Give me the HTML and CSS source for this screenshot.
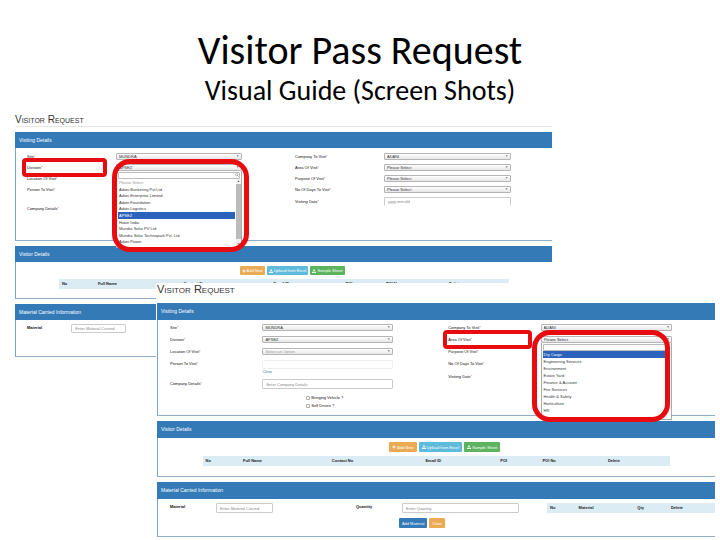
FILE: index.html
```html
<!DOCTYPE html>
<html lang="en">
<head>
  <meta charset="UTF-8" />
  <meta name="viewport" content="width=device-width, initial-scale=1.0"/>
  <title>Visitor Pass Request</title>
  <link rel="stylesheet" href="styles.css">
</head>
<body>
  <header class="slide-title">
    <h1>Visitor Pass Request</h1>
    <p>Visual Guide (Screen Shots)</p>
  </header>

  <main class="stage">
    <!-- Step 1: choose the division -->
    <section class="shot shot-division">
      <h2>Visitor Request</h2>

      <div class="panel panel-visit">
        <h3>Visiting Details</h3>
        <form class="form">
          <div class="fields">
            <div class="field">
              <label for="site1">Site<i>*</i></label>
              <div class="control select"><select id="site1"><option>MUNDRA</option></select></div>
            </div>
            <div class="field">
              <label for="division1">Division<i>*</i><span class="mark mark-label"></span></label>
              <div class="control select">
                <select id="division1"><option>APSEZ</option></select>
                <div class="dropdown">
                  <input class="search" type="text" aria-label="Search division" />
                  <svg class="lens" viewBox="0 0 10 10"><circle cx="4" cy="4" r="3"/><path d="M6 6l3 3"/></svg>
                  <ul>
                    <li class="muted">Please Select</li>
                    <li>Adani Bunkering Pvt Ltd</li>
                    <li>Adani Enterprise Limited</li>
                    <li>Adani Foundation</li>
                    <li>Adani Logistics</li>
                    <li class="active">APSEZ</li>
                    <li>Howe India</li>
                    <li>Mundra Solar PV Ltd</li>
                    <li>Mundra Solar Technopark Pvt. Ltd</li>
                    <li>Adani Power</li>
                  </ul>
                  <div class="scroll"><span>▲</span><b></b><span>▼</span></div>
                </div>
                <span class="mark mark-division"></span>
              </div>
            </div>
            <div class="field">
              <label for="location1">Location Of Visit<i>*</i></label>
              <div class="control select"><select id="location1"></select></div>
            </div>
            <div class="field field-person">
              <label for="person1">Person To Visit<i>*</i></label>
              <div class="control"><input class="faint" type="text" id="person1" /></div>
            </div>
            <div class="field">
              <label for="details1">Company Details<i>*</i></label>
              <div class="control"><input type="text" id="details1" /></div>
            </div>
          </div>
          <div class="fields fields-right">
            <div class="field">
              <label for="company1">Company To Visit<i>*</i></label>
              <div class="control select"><select id="company1"><option>ADANI</option></select></div>
            </div>
            <div class="field">
              <label for="area1">Area Of Visit<i>*</i></label>
              <div class="control select"><select id="area1"><option>Please Select</option></select></div>
            </div>
            <div class="field">
              <label for="purpose1">Purpose Of Visit<i>*</i></label>
              <div class="control select"><select id="purpose1"><option>Please Select</option></select></div>
            </div>
            <div class="field">
              <label for="days1">No Of Days To Visit<i>*</i></label>
              <div class="control select"><select id="days1"><option>Please Select</option></select></div>
            </div>
            <div class="field">
              <label for="date1">Visiting Date<i>*</i></label>
              <div class="control"><input class="open" type="text" id="date1" placeholder="yyyy-mm-dd" /></div>
            </div>
          </div>
        </form>
      </div>

      <div class="panel panel-visitors">
        <h3>Visitor Details</h3>
        <div class="actions">
          <button class="btn orange" type="button"><svg viewBox="0 0 10 10"><path d="M4 1h2v3h3v2H6v3H4V6H1V4h3z"/></svg>Add New</button>
          <button class="btn cyan" type="button"><svg viewBox="0 0 10 10"><path d="M5 0l3 4H6v3H4V4H2zM0 7h3v1h4V7h3v3H0z"/></svg>Upload from Excel</button>
          <button class="btn green" type="button"><svg viewBox="0 0 10 10"><path d="M4 0h2v3h2L5 7 2 3h2zM0 7h3v1h4V7h3v3H0z"/></svg>Sample Sheet</button>
        </div>
        <table class="visitors">
          <tr>
            <th class="w8">No</th>
            <th class="w19">Full Name</th>
            <th class="w20">Contact No</th>
            <th class="w16">Email ID</th>
            <th class="w9">POI</th>
            <th class="w14">POI No</th>
            <th class="w14">Delete</th>
          </tr>
        </table>
      </div>

      <div class="panel panel-material">
        <h3>Material Carried Information</h3>
        <form class="material">
          <label for="material1">Material</label>
          <input type="text" id="material1" placeholder="Enter Material Carried" />
        </form>
      </div>
    </section>

    <!-- Step 2: choose the area of visit -->
    <section class="shot shot-area">
      <h2>Visitor Request</h2>

      <div class="panel panel-visit">
        <h3>Visiting Details</h3>
        <form class="form">
          <div class="fields">
            <div class="field">
              <label for="site2">Site<i>*</i></label>
              <div class="control select"><select id="site2"><option>MUNDRA</option></select></div>
            </div>
            <div class="field">
              <label for="division2">Division<i>*</i></label>
              <div class="control select"><select id="division2"><option>APSEZ</option></select></div>
            </div>
            <div class="field">
              <label for="location2">Location Of Visit<i>*</i></label>
              <div class="control select"><select class="muted" id="location2"><option>Select an Option</option></select></div>
            </div>
            <div class="field field-person">
              <label for="person2">Person To Visit<i>*</i></label>
              <div class="control"><input class="faint" type="text" id="person2" /><a href="#">Clear</a></div>
            </div>
            <div class="field">
              <label for="details2">Company Details<i>*</i></label>
              <div class="control"><input type="text" id="details2" placeholder="Enter Company Details" /></div>
            </div>
            <div class="checks">
              <label><input type="checkbox" />Bringing Vehicle ?</label>
              <label><input type="checkbox" />Self Driven ?</label>
            </div>
          </div>
          <div class="fields fields-right">
            <div class="field">
              <label for="company2">Company To Visit<i>*</i></label>
              <div class="control select"><select id="company2"><option>ADANI</option></select></div>
            </div>
            <div class="field">
              <label for="area2">Area Of Visit<i>*</i><span class="mark mark-label"></span></label>
              <div class="control select">
                <select id="area2"><option>Please Select</option></select>
                <div class="dropdown">
                  <input class="search" type="text" aria-label="Search area" />
                  <ul>
                    <li class="active">Dry Cargo</li>
                    <li>Engineering Services</li>
                    <li>Environment</li>
                    <li>Estate Yard</li>
                    <li>Finance &amp; Account</li>
                    <li>Fire Services</li>
                    <li>Health &amp; Safety</li>
                    <li>Horticulture</li>
                    <li>HR</li>
                  </ul>
                </div>
                <span class="mark mark-area"></span>
              </div>
            </div>
            <div class="field">
              <label for="purpose2">Purpose Of Visit<i>*</i></label>
              <div class="control select"><select id="purpose2"></select></div>
            </div>
            <div class="field">
              <label for="days2">No Of Days To Visit<i>*</i></label>
              <div class="control select"><select id="days2"></select></div>
            </div>
            <div class="field">
              <label for="date2">Visiting Date<i>*</i></label>
              <div class="control"><input class="open" type="text" id="date2" /></div>
            </div>
          </div>
        </form>
      </div>

      <div class="panel panel-visitors">
        <h3>Visitor Details</h3>
        <div class="actions">
          <button class="btn orange" type="button"><svg viewBox="0 0 10 10"><path d="M4 1h2v3h3v2H6v3H4V6H1V4h3z"/></svg>Add New</button>
          <button class="btn cyan" type="button"><svg viewBox="0 0 10 10"><path d="M5 0l3 4H6v3H4V4H2zM0 7h3v1h4V7h3v3H0z"/></svg>Upload from Excel</button>
          <button class="btn green" type="button"><svg viewBox="0 0 10 10"><path d="M4 0h2v3h2L5 7 2 3h2zM0 7h3v1h4V7h3v3H0z"/></svg>Sample Sheet</button>
        </div>
        <table class="visitors">
          <tr>
            <th class="w8">No</th>
            <th class="w19">Full Name</th>
            <th class="w20">Contact No</th>
            <th class="w16">Email ID</th>
            <th class="w9">POI</th>
            <th class="w14">POI No</th>
            <th class="w14">Delete</th>
          </tr>
        </table>
      </div>

      <div class="panel panel-material">
        <h3>Material Carried Information</h3>
        <form class="material">
          <label for="material2">Material</label>
          <input type="text" id="material2" placeholder="Enter Material Carried" />
          <label class="quantity" for="quantity2">Quantity</label>
          <input type="text" id="quantity2" placeholder="Enter Quantity" />
          <table class="items">
            <tr>
              <th class="w17">No</th>
              <th class="w35">Material</th>
              <th class="w20">Qty</th>
              <th>Delete</th>
            </tr>
          </table>
          <div class="material-actions">
            <button class="btn navy" type="button">Add Material</button>
            <button class="btn orange" type="button">Clear</button>
          </div>
        </form>
      </div>
    </section>
  </main>
</body>
</html>
```

FILE: styles.css
```css
* {
  box-sizing: border-box;
}

body {
  min-height: 100vh;
  margin: 0;
  background-color: #fff;
  color: #333;
  font-family: 'Liberation Sans', Arial, sans-serif;
  font-size: 4px;
}

.slide-title {
  padding-top: 28px;
  color: #000;
  font-family: Carlito, Calibri, 'Open Sans', sans-serif;
  text-align: center;
}

.slide-title h1 {
  margin: 0;
  font-size: 40px;
  line-height: 46px;
  font-weight: normal;
}

.slide-title p {
  margin: 0;
  font-size: 28px;
  line-height: 34px;
}

/* the second shot is laid over the lower right of the first */
.stage {
  display: grid;
  grid-template-columns: 141fr 396fr 163fr;
  align-items: start;
  margin-top: 5px;
  padding: 0 5px 0 15px;
}

/* screen shots */
.shot {
  --head: 16px;
  --gap: 4px;
  --ctl: 9px;
  --indent: 11px;
  --btn-pad: 2px;
  min-width: 0;
  isolation: isolate;
  background-color: #fff;
}

.shot-division {
  grid-area: 1 / 1 / 2 / 3;
}

.shot-area {
  --head: 17px;
  --gap: 5px;
  --ctl: 10px;
  --indent: 12px;
  --btn-pad: 3px;
  grid-area: 1 / 2 / 2 / 4;
  margin-top: 170px;
  padding-left: 1px;
}

.shot h2 {
  margin: 0;
  font-size: 11px;
  line-height: 13px;
  font-weight: normal;
  font-variant: small-caps;
}

.shot-division h2 {
  margin-bottom: 5px;
  border-bottom: 1px solid #e8e8e8;
  font-size: 10px;
}

.shot-area h2 {
  margin-bottom: 7px;
}

.panel {
  margin-bottom: 5px;
  border-left: 1px solid #7ba3c8;
  border-bottom: 1px solid #8fadca;
}

.panel h3 {
  margin: 0 0 0 -1px;
  padding-left: 4px;
  background-color: #337ab7;
  color: #fff;
  font-size: 5px;
  line-height: var(--head);
  font-weight: normal;
}

.shot-division .panel-visit {
  min-height: 109px;
}

.shot-area .panel-visit {
  min-height: 113px;
}

.shot-division .panel-visitors,
.shot-division .panel-material {
  min-height: 53px;
}

.shot-area .panel-visitors {
  min-height: 56px;
}

.shot-area .panel-material {
  min-height: 55px;
  margin-bottom: 0;
}

/* form */
.form {
  display: grid;
  grid-template-columns: 268fr 257fr;
  padding: 5px 0 0 var(--indent);
}

.shot-area .form {
  padding-top: 4px;
}

.fields {
  display: flex;
  flex-direction: column;
  gap: var(--gap);
}

.field {
  display: grid;
  grid-template-columns: 89fr 126fr 53fr;
  align-items: start;
}

.fields-right .field {
  grid-template-columns: 89fr 127fr 41fr;
}

.field-person {
  min-height: 14px;
}

label {
  position: relative;
  color: #111;
  line-height: 7px;
  white-space: nowrap;
}

.field:nth-child(5) label {
  line-height: var(--ctl);
}

label i {
  color: #d9534f;
  font-style: normal;
}

.control {
  position: relative;
}

input,
select {
  display: block;
  width: 100%;
  min-width: 0;
  margin: 0;
  border: 1px solid #ccc;
  border-radius: 1px;
  background-color: #fff;
  color: #333;
  font-family: inherit;
  font-size: 4px;
}

input {
  height: var(--ctl);
  padding: 0 3px;
}

input::placeholder {
  color: #888;
}

input.faint {
  height: 9px;
  border-color: #eee;
}

input.open {
  border-bottom-color: #fff;
}

select {
  height: 7px;
  padding: 0 2px;
  border-color: #b5b5b5;
  background-image: linear-gradient(#fff, #e6e6e6);
  line-height: 5px;
  appearance: none;
}

.select::after {
  content: '▼';
  position: absolute;
  top: 2px;
  right: 3px;
  color: #666;
  font-size: 3px;
  line-height: 3px;
}

.control a {
  display: block;
  color: #337ab7;
  line-height: 5px;
  text-decoration: none;
}

.checks {
  padding-left: 49%;
}

.checks label {
  display: flex;
  align-items: center;
  gap: 1px;
  line-height: 8px;
}

.checks input {
  width: 4px;
  height: 4px;
  padding: 0;
  border: 1px solid #aaa;
  appearance: none;
}

/* opened list */
.dropdown {
  position: absolute;
  z-index: 2;
  top: 7px;
  left: 0;
  right: 0;
  padding: 1px 1px 2px;
  border: 1px solid #aaa;
  border-top: 0;
  background-color: #fff;
}

.search {
  height: 7px;
  border-color: #bbb;
}

.lens {
  position: absolute;
  top: 2px;
  right: 2px;
  width: 4px;
  height: 4px;
  fill: none;
  stroke: #555;
  stroke-width: 1;
}

.dropdown ul {
  margin: 0;
  padding: 0;
  color: #333;
  line-height: 7px;
  list-style: none;
}

.shot-division .dropdown ul {
  display: grid;
  grid-auto-rows: 1fr;
  height: 66px;
  margin: 0 5px 0 0;
}

.shot-area .dropdown {
  padding-bottom: 5px;
}

.dropdown li {
  padding-left: 1px;
  overflow: hidden;
  white-space: nowrap;
}

.muted {
  color: #999;
}

.dropdown li.active {
  background-color: #2a62bc;
  color: #fff;
}

.scroll {
  position: absolute;
  top: 8px;
  right: 0;
  bottom: 0;
  display: flex;
  flex-direction: column;
  align-items: center;
  width: 5px;
  background-color: #f1f1f1;
  color: #555;
  font-size: 3px;
  line-height: 5px;
}

.scroll b {
  width: 100%;
  flex: 1;
  margin-bottom: 3px;
  background-color: #bcbcbc;
}

/* red outlines */
.mark {
  position: absolute;
  z-index: 3;
  border: 5px solid #e60c10;
  pointer-events: none;
}

.mark-label {
  top: -6px;
  right: 9px;
  bottom: -6px;
  left: -5px;
  border-width: 4px;
  border-radius: 4px;
}

.mark-division {
  top: -5px;
  right: -7px;
  left: -4px;
  height: 93px;
  border-radius: 18px;
}

.mark-area {
  top: -6px;
  right: 2px;
  left: -9px;
  height: 92px;
  border-radius: 18px;
}

/* buttons and tables */
.actions {
  display: flex;
  justify-content: center;
  gap: 2px;
  padding: 4px 0 4px 3%;
}

.btn {
  display: flex;
  align-items: center;
  gap: 1px;
  height: var(--ctl);
  padding: 0 var(--btn-pad);
  border: 0;
  border-radius: 1px;
  color: #fff;
  font-family: inherit;
  font-size: 4px;
  white-space: nowrap;
}

.btn svg {
  width: 4px;
  height: 4px;
  fill: #fff;
}

.orange {
  background-color: #ebab55;
}

.cyan {
  background-color: #5fbbdb;
}

.green {
  background-color: #5cb45e;
}

.navy {
  background-color: #337ab7;
}

table {
  border-collapse: collapse;
  table-layout: fixed;
  background-color: #dbecf5;
}

th {
  height: 10px;
  padding: 0 0 0 3px;
  color: #222;
  font-size: 4px;
  line-height: 10px;
  text-align: left;
  white-space: nowrap;
}

.visitors {
  width: 84%;
  margin-left: 8%;
}

.w8 { width: 8%; }
.w9 { width: 9%; }
.w14 { width: 14%; }
.w16 { width: 16%; }
.w17 { width: 17%; }
.w19 { width: 19%; }
.w20 { width: 20%; }
.w35 { width: 35%; }

.material {
  display: grid;
  grid-template-columns: 46fr 57fr 83fr 46fr 117fr 28fr 168fr;
  row-gap: 5px;
  padding: 4px 0 0 var(--indent);
}

.material label {
  font-weight: bold;
}

.quantity {
  grid-column: 4;
}

.items {
  grid-column: 7;
  width: 100%;
}

.material-actions {
  grid-column: 1 / -1;
  display: flex;
  gap: 2px;
  padding-left: 42%;
}
```
